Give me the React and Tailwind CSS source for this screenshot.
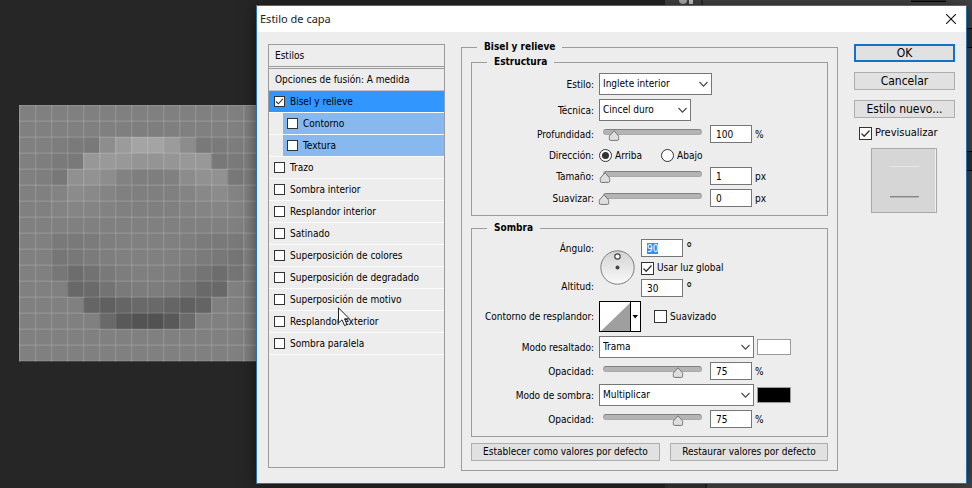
import { useEffect, useRef, useState } from "react";

// grey level of each cell in the zoomed document, 16 x 16
const pixels = [
  "80 80 80 80 80 80 80 80 80 80 80 80 80 80 80 80",
  "80 80 80 80 80 80 7f 7e 7e 7f 80 80 80 80 80 80",
  "80 80 7d 7a 79 8d 9b a4 a4 9b 8c 79 7a 7d 80 80",
  "80 7e 7a 79 97 99 98 94 94 95 98 98 78 7a 7e 80",
  "80 7e 78 90 92 8d 82 7e 7e 80 8c 91 91 78 7e 80",
  "80 80 83 8b 89 84 80 7f 7f 80 84 88 8b 83 80 80",
  "80 80 83 85 84 82 80 7f 7f 80 82 84 85 83 80 80",
  "80 80 80 80 80 80 80 80 80 80 80 80 80 80 80 80",
  "80 80 79 79 7b 7e 80 80 80 80 7e 7b 79 79 80 80",
  "80 80 76 78 7b 7e 80 80 80 80 7e 7b 78 75 80 80",
  "80 80 77 6d 72 79 7d 7f 7f 7d 79 74 6d 75 80 80",
  "80 80 80 68 6a 73 7a 7c 7d 7b 73 69 68 80 80 80",
  "80 80 80 80 65 60 65 69 69 65 60 64 80 80 80 80",
  "80 80 80 80 80 69 59 53 52 59 6b 80 80 80 80 80",
  "80 80 80 80 80 80 80 80 80 80 80 80 80 80 80 80",
  "80 80 80 80 80 80 80 80 80 80 80 80 80 80 80 80",
].map((row) => row.split(" "));

const effects = [
  { id: "bisel", name: "Bisel y relieve", active: true },
  { id: "contorno", name: "Contorno", child: true },
  { id: "textura", name: "Textura", child: true },
  { id: "trazo", name: "Trazo" },
  { id: "sombra-int", name: "Sombra interior" },
  { id: "resplandor-int", name: "Resplandor interior" },
  { id: "satinado", name: "Satinado" },
  { id: "colores", name: "Superposición de colores" },
  { id: "degradado", name: "Superposición de degradado" },
  { id: "motivo", name: "Superposición de motivo" },
  { id: "resplandor-ext", name: "Resplandor exterior" },
  { id: "sombra-par", name: "Sombra paralela" },
];

function Canvas() {
  return (
    <svg
      className="absolute left-[19px] top-[105px]"
      width="257"
      height="257"
      shapeRendering="crispEdges"
    >
      {pixels.map((row, y) =>
        row.map((v, x) => (
          <rect
            key={`${x}-${y}`}
            x={x * 16}
            y={y * 16}
            width="16"
            height="16"
            fill={`#${v}${v}${v}`}
          />
        ))
      )}
      {Array.from({ length: 17 }, (_, i) => (
        <g key={i} fill="#ffffff" fillOpacity="0.13">
          <rect x={i * 16} y="0" width="1" height="257" />
          <rect x="0" y={i * 16} width="257" height="1" />
          <rect x={i * 16 + 1} y="0" width="1" height="257" fillOpacity="0.05" />
          <rect x="0" y={i * 16 - 1} width="257" height="1" fillOpacity="0.07" />
        </g>
      ))}
    </svg>
  );
}

function Check({ id, defaultChecked, small }) {
  return (
    <span className={small ? "relative size-[11px] shrink-0" : "relative size-[13px] shrink-0"}>
      <input
        id={id}
        type="checkbox"
        defaultChecked={defaultChecked}
        className="peer block size-full appearance-none border border-[#333333] bg-white"
      />
      <svg
        viewBox="0 0 13 13"
        className="pointer-events-none absolute inset-0 hidden size-full peer-checked:block"
        fill="none"
        stroke="#333333"
        strokeWidth="1.3"
      >
        <path d="M2.5 6.5 L5.2 9.2 L10.5 3.5" />
      </svg>
    </span>
  );
}

function Select({ id, options, width }) {
  return (
    <span className={`relative ${width}`}>
      <select
        id={id}
        className="block h-[22px] w-full appearance-none border border-[#767676] bg-white pl-[3px] leading-5"
      >
        {options.map((o) => (
          <option key={o}>{o}</option>
        ))}
      </select>
      <svg
        className="pointer-events-none absolute right-1 top-2"
        width="9"
        height="7"
        fill="none"
        stroke="#444444"
        strokeWidth="1.1"
      >
        <path d="M0.5 1 L4.5 5.2 L8.5 1" />
      </svg>
    </span>
  );
}

function NumberBox({ id, value, inputRef }) {
  return (
    <input
      id={id}
      ref={inputRef}
      type="text"
      defaultValue={value}
      className="block h-[18px] w-[42px] border border-[#767676] bg-white pl-[5px] leading-4 outline-none selection:bg-[#3390f0] selection:text-white"
    />
  );
}

function Row({ id, label, height, children }) {
  return (
    <div className={`flex items-center ${height}`}>
      <label htmlFor={id} className="w-[122px] shrink-0 text-right">
        {label}
      </label>
      <div className="ml-[5px] flex items-center">{children}</div>
    </div>
  );
}

function SliderRow({ id, label, value, pos, unit }) {
  const [at, setAt] = useState(pos);

  return (
    <Row id={id} label={label} height="h-[18px]">
      <span className="relative mb-1 ml-1 h-[6px] w-[99px]">
        <input
          type="range"
          aria-label={label}
          min="0"
          max="100"
          value={at}
          onChange={(e) => setAt(Number(e.target.value))}
          className="block h-[6px] w-full appearance-none rounded-sm border border-[#a8a8a8] border-t-[#808080] bg-[#b4b4b4] [&::-webkit-slider-thumb]:opacity-0"
        />
        <svg
          className="pointer-events-none absolute top-px -translate-x-1/2"
          style={{ left: `${at}%` }}
          width="11"
          height="11"
        >
          <path
            d="M5.5 0.8 L10.3 6.2 V9 Q10.3 10.4 9 10.4 H2 Q0.7 10.4 0.7 9 V6.2 Z"
            fill="#dedede"
            stroke="#747474"
          />
        </svg>
      </span>
      <span className="ml-2">
        <NumberBox id={id} value={value} />
      </span>
      <span className="ml-[3px]">{unit}</span>
    </Row>
  );
}

function Radio({ id, label, defaultChecked }) {
  return (
    <span className="flex items-center gap-[3px]">
      <span className="relative size-[13px]">
        <input
          id={id}
          type="radio"
          name="direccion"
          defaultChecked={defaultChecked}
          className="peer block size-full appearance-none rounded-full border border-[#333333] bg-white"
        />
        <span className="pointer-events-none absolute inset-[3px] hidden rounded-full bg-[#333333] peer-checked:block" />
      </span>
      <label htmlFor={id}>{label}</label>
    </span>
  );
}

function EffectList() {
  return (
    <div className="mb-[3px] mt-3 w-[177px] shrink-0 border border-[#9b9b9b]">
      <div className="h-[22px] border-b border-[#9b9b9b] pl-[6px] leading-[22px]">Estilos</div>
      <div className="mt-px h-[23px] border-y border-t-[#9b9b9b] border-b-[#c4c4c4] pl-[6px] leading-[22px]">
        Opciones de fusión: A medida
      </div>
      <ul>
        {effects.map((e) => (
          <li
            key={e.id}
            className={`border-b border-[#fcfcfc] ${e.child ? "pl-[14px]" : ""}`}
          >
            <div
              className={`flex h-[21px] items-center gap-[5px] ${
                e.active ? "bg-[#3296ff] pl-[5px]" : e.child ? "bg-[#87b9ee] pl-1" : "pl-[5px]"
              }`}
            >
              <Check id={e.id} defaultChecked={e.active} small />
              <label htmlFor={e.id}>{e.name}</label>
            </div>
          </li>
        ))}
      </ul>
    </div>
  );
}

function Group({ title, children }) {
  return (
    <fieldset className="border border-[#9b9b9b] pb-2 pt-[5px]">
      <legend className="ml-[15px] px-[7px] font-bold leading-3">{title}</legend>
      <div className="flex flex-col gap-1">{children}</div>
    </fieldset>
  );
}

function Structure() {
  return (
    <Group title="Estructura">
      <Row id="estilo" label="Estilo:" height="h-[22px]">
        <Select id="estilo" width="w-[113px]" options={["Inglete interior"]} />
      </Row>
      <Row id="tecnica" label="Técnica:" height="h-[22px]">
        <Select id="tecnica" width="w-[92px]" options={["Cincel duro"]} />
      </Row>
      <SliderRow id="profundidad" label="Profundidad:" value="100" pos={11} unit="%" />
      <Row id="arriba" label="Dirección:" height="h-4">
        <div className="flex gap-[19px]">
          <Radio id="arriba" label="Arriba" defaultChecked />
          <Radio id="abajo" label="Abajo" />
        </div>
      </Row>
      <SliderRow id="tamano" label="Tamaño:" value="1" pos={2} unit="px" />
      <SliderRow id="suavizar" label="Suavizar:" value="0" pos={1} unit="px" />
    </Group>
  );
}

function Dial() {
  return (
    <svg width="35" height="35">
      <defs>
        <linearGradient id="dial" x1="0" y1="0" x2="0" y2="1">
          <stop offset="0" stopColor="#d2d2d2" />
          <stop offset="1" stopColor="#fafafa" />
        </linearGradient>
      </defs>
      <circle cx="17.5" cy="17.5" r="16.7" fill="url(#dial)" stroke="#7d7d7d" />
      <circle cx="17.5" cy="6.5" r="2.7" fill="#ffffff" stroke="#444444" strokeWidth="1.2" />
      <circle cx="17.5" cy="17.5" r="2" fill="#444444" />
    </svg>
  );
}

function Shade() {
  const angle = useRef(null);

  useEffect(() => {
    angle.current.focus();
    angle.current.select();
  }, []);

  return (
    <Group title="Sombra">
      <div className="flex h-[58px]">
        <div className="flex w-[122px] shrink-0 flex-col justify-between py-[3px] text-right leading-[14px]">
          <label htmlFor="angulo">Ángulo:</label>
          <label htmlFor="altitud">Altitud:</label>
        </div>
        <div className="ml-[6px] mt-[11px]">
          <Dial />
        </div>
        <div className="ml-[6px] flex flex-col justify-between leading-3">
          <div className="flex items-start gap-[3px]">
            <NumberBox id="angulo" value="90" inputRef={angle} />
            <span className="text-sm leading-[18px]">°</span>
          </div>
          <div className="flex items-center gap-[3px]">
            <Check id="luz" defaultChecked />
            <label htmlFor="luz">Usar luz global</label>
          </div>
          <div className="flex items-start gap-[3px]">
            <NumberBox id="altitud" value="30" />
            <span className="text-sm leading-[18px]">°</span>
          </div>
        </div>
      </div>
      <Row id="contorno-resp" label="Contorno de resplandor:" height="h-[31px]">
        <button
          id="contorno-resp"
          type="button"
          className="flex h-[31px] w-[42px] border border-black bg-white"
        >
          <svg width="40" height="29">
            <path d="M1 29 L30 1 V29 Z" fill="#9f9f9f" />
            <path d="M30.5 0 V29" stroke="#000000" />
            <path d="M32.5 13 H38 L35.2 16.4 Z" fill="#000000" />
          </svg>
        </button>
        <span className="ml-[13px] flex items-center gap-[3px]">
          <Check id="suavizado" />
          <label htmlFor="suavizado">Suavizado</label>
        </span>
      </Row>
      <Row id="resaltado" label="Modo resaltado:" height="h-[22px]">
        <Select id="resaltado" width="w-[155px]" options={["Trama"]} />
        <button
          type="button"
          aria-label="Color de resaltado"
          className="ml-[3px] h-4 w-[34px] border border-[#9b9b9b] bg-white"
        />
      </Row>
      <SliderRow id="opacidad-r" label="Opacidad:" value="75" pos={76} unit="%" />
      <Row id="sombra" label="Modo de sombra:" height="h-[22px]">
        <Select id="sombra" width="w-[155px]" options={["Multiplicar"]} />
        <button
          type="button"
          aria-label="Color de sombra"
          className="ml-[3px] h-4 w-[34px] border border-[#9b9b9b] bg-black"
        />
      </Row>
      <SliderRow id="opacidad-s" label="Opacidad:" value="75" pos={76} unit="%" />
    </Group>
  );
}

function SideButton({ primary, children }) {
  return (
    <button
      type="button"
      className={`h-[18px] w-full bg-[#e1e1e1] text-center ${
        primary
          ? "border-2 border-[#0f74c8] leading-[14px]"
          : "border border-[#adadad] leading-4"
      }`}
    >
      {children}
    </button>
  );
}

function SideColumn() {
  return (
    <div className="mt-3 w-[101px] shrink-0 text-xs">
      <div className="flex flex-col gap-[10px]">
        <SideButton primary>OK</SideButton>
        <SideButton>Cancelar</SideButton>
        <SideButton>Estilo nuevo...</SideButton>
      </div>
      <div className="ml-[5px] mt-[7px] flex h-4 items-center gap-[3px] text-[11px]">
        <Check id="previsualizar" defaultChecked />
        <label htmlFor="previsualizar">Previsualizar</label>
      </div>
      <div className="ml-[17px] mt-[7px] flex h-[65px] w-[66px] flex-col items-center justify-between border border-[#a9a9a9] bg-[#d6d6d6] pb-[14px] pt-[17px] shadow-[inset_-1px_0_0_#f0f0f0]">
        <span className="h-px w-[29px] bg-[#e6e6e6]" />
        <span className="h-[2px] w-[29px] border-b border-[#b4b4b4] bg-[#858585]" />
      </div>
    </div>
  );
}

export default function App() {
  return (
    <div className="relative min-h-screen overflow-hidden bg-[#262626] font-['DejaVu_Sans_Condensed','DejaVu_Sans',sans-serif] text-[10px] text-black">
      {/* editor panels behind the dialog */}
      <div className="absolute inset-y-0 right-0 w-[307px] bg-[#454545]">
        <div className="absolute left-0 top-0 h-[6px] w-[38px] border-r-2 border-[#2c2c2c] bg-[#454545]">
          <span className="absolute left-[14px] top-0 h-1 w-2 rounded-b-full bg-[#b5b5b5]" />
          <span className="absolute left-6 top-0 h-1 w-1 bg-[#d0d0d0]" />
        </div>
        <div className="absolute right-[26px] top-0 h-[2px] w-[35px] border-b border-black bg-[#2c2c2c]" />
        <div className="absolute right-0 top-7 h-5 w-[6px] border-y border-black bg-[#303030]" />
        <div className="absolute right-0 top-[151px] h-5 w-[6px] border-y border-black bg-[#303030]" />
        <div className="absolute bottom-0 left-0 h-[5px] w-[42px] border-r-2 border-[#242424] bg-[#363636]" />
      </div>
      <Canvas />

      <div
        role="dialog"
        aria-labelledby="titulo"
        className="absolute left-[256px] right-[5px] top-[5px] border border-[#2274b5] bg-[#ededed] pb-3 shadow-[0_0_14px_rgba(0,0,0,0.5)]"
      >
        <div className="flex h-[26px] items-center justify-between bg-white pl-[3px] pr-[10px]">
          <h1 id="titulo" className="font-['Noto_Sans',sans-serif] text-[11px] leading-6 text-[#222222]">
            Estilo de capa
          </h1>
          <button type="button" aria-label="Cerrar">
            <svg width="10" height="10" fill="none" stroke="#111111" strokeWidth="1.1">
              <path d="M0 0 L10 10 M10 0 L0 10" />
            </svg>
          </button>
        </div>
        <div className="flex px-[11px]">
          <EffectList />
          <fieldset className="ml-4 mt-[9px] min-w-0 flex-1 border border-[#9b9b9b] px-[9px] pb-[9px] pt-[3px]">
            <legend className="ml-[6px] px-[7px] font-bold leading-3">Bisel y relieve</legend>
            <div className="flex flex-col gap-[6px]">
              <Structure />
              <Shade />
              <div className="flex gap-[10px]">
                <button
                  type="button"
                  className="h-[18px] flex-[188] border border-[#adadad] bg-[#e1e1e1] leading-4"
                >
                  Establecer como valores por defecto
                </button>
                <button
                  type="button"
                  className="h-[18px] flex-[157] border border-[#adadad] bg-[#e1e1e1] leading-4"
                >
                  Restaurar valores por defecto
                </button>
              </div>
            </div>
          </fieldset>
          <div className="w-4 shrink-0" />
          <SideColumn />
        </div>
      </div>

      <svg className="pointer-events-none absolute left-[338px] top-[307px]" width="13" height="20">
        <path
          d="M0.5 0.8 V16 L4 12.8 L6.6 18.6 L9 17.5 L6.5 11.8 H11.3 Z"
          fill="#ffffff"
          stroke="#222222"
        />
      </svg>
    </div>
  );
}
